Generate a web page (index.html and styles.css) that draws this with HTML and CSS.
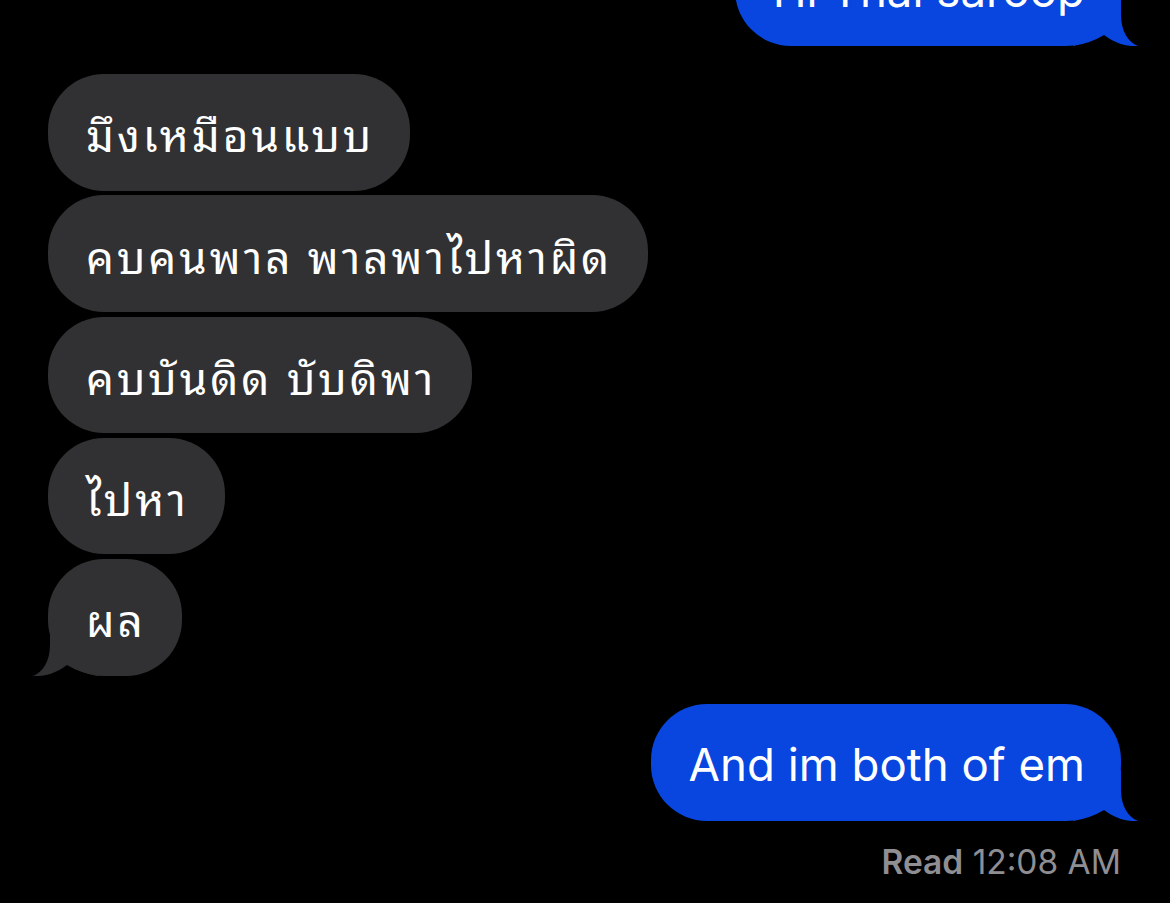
FILE: index.html
```html
<!DOCTYPE html>
<html lang="th">
<head>
<meta charset="utf-8">
<link rel="stylesheet" href="styles.css">
</head>
<body>
<main class="thread">
  <div class="row sent">
    <div class="bubble blue">
      <span class="text">Hi Thai saroop</span>
      <svg class="tail tail-r" viewBox="0 0 65 51" width="65" height="51"><path d="M48 0 L48 20 C48 36 55 47 65 51 C52 52 40 47 31 40 Q18 48 0 51 L0 0 Z"/></svg>
    </div>
  </div>

  <div class="group">
    <div class="row recv"><div class="bubble gray"><span class="text th">มึงเหมือนแบบ</span></div></div>
    <div class="row recv"><div class="bubble gray"><span class="text th">คบคนพาล พาลพาไปหาผิด</span></div></div>
    <div class="row recv"><div class="bubble gray"><span class="text th">คบบันดิด บับดิพา</span></div></div>
    <div class="row recv"><div class="bubble gray"><span class="text th">ไปหา</span></div></div>
    <div class="row recv">
      <div class="bubble gray">
        <span class="text th">ผล</span>
        <svg class="tail tail-l" viewBox="0 0 65 51" width="65" height="51"><path d="M17 0 L17 20 C17 36 10 47 0 51 C13 52 25 47 34 40 Q47 48 65 51 L65 0 Z"/></svg>
      </div>
    </div>
  </div>

  <div class="row sent">
    <div class="bubble blue">
      <span class="text">And im both of em</span>
      <svg class="tail tail-r" viewBox="0 0 65 51" width="65" height="51"><path d="M48 0 L48 20 C48 36 55 47 65 51 C52 52 40 47 31 40 Q18 48 0 51 L0 0 Z"/></svg>
    </div>
  </div>

  <div class="status"><span class="read">Read</span> 12:08 AM</div>
</main>
</body>
</html>
```

FILE: styles.css
```css
html, body {
  margin: 0;
  padding: 0;
  background: #000;
  overflow: hidden;
}

body {
  width: 1170px;
  height: 903px;
  font-family: Inter, "Noto Sans", sans-serif;
  color: #fff;
}

.thread {
  display: flex;
  flex-direction: column;
  gap: 28px;
  margin-top: -71px;
  padding: 0 49px 0 48px;
}

.group {
  display: flex;
  flex-direction: column;
  gap: 4.75px;
}

.row {
  display: flex;
}

.row.sent {
  justify-content: flex-end;
}

.row.recv {
  justify-content: flex-start;
}

.bubble {
  position: relative;
  box-sizing: border-box;
  padding: 0 36px 0 38px;
  border-radius: 56px;
  display: flex;
  align-items: center;
  white-space: nowrap;
}

.bubble.blue {
  height: 117px;
  background: #0846df;
}

.bubble.gray {
  height: 116.5px;
  background: #313133;
}

.text {
  position: relative;
  z-index: 1;
  font-size: 45.6px;
  line-height: 1;
  letter-spacing: 0;
}

.bubble.blue .text {
  padding-top: 6px;
}

.text.th {
  font-family: "Noto Sans Thai Looped", "Noto Sans Thai", "Loma", "Garuda", sans-serif;
  font-size: 44px;
  letter-spacing: 3px;
}

.tail {
  position: absolute;
  bottom: 0;
  display: block;
}

.tail-r {
  right: -17px;
}

.tail-r path {
  fill: #0846df;
}

.tail-l {
  left: -15px;
}

.tail-l path {
  fill: #313133;
}

.status {
  align-self: flex-end;
  margin-top: -3px;
  font-size: 33.5px;
  line-height: 1;
  color: #8e8e93;
}

.status .read {
  font-weight: 600;
}
```
